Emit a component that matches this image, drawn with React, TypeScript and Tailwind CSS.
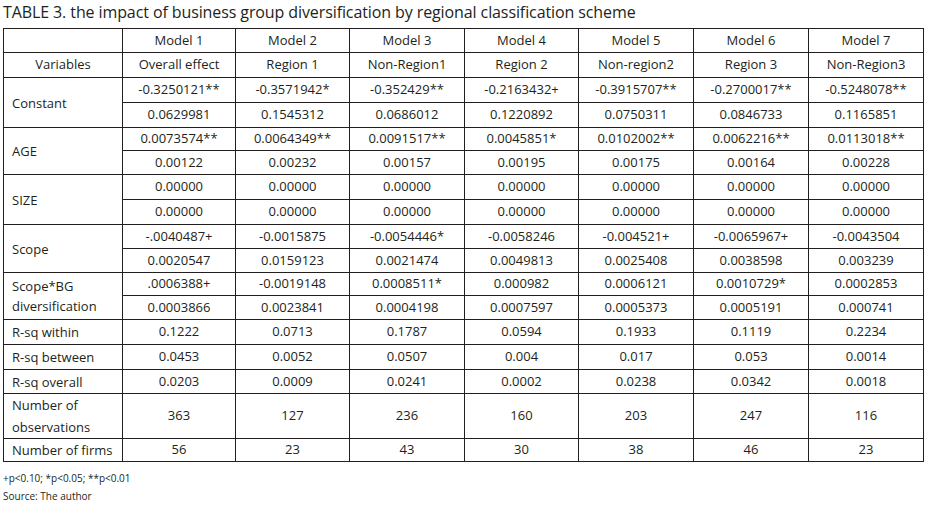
import React from 'react'

type Row = { label: string; values: string[]; h: string }
type Group = { label: string; rows: string[][]; h: string[] }

const groups: Group[] = [
  {
    label: 'Constant',
    h: ['h-[25px]', 'h-[25px]'],
    rows: [
      ['-0.3250121**', '-0.3571942*', '-0.352429**', '-0.2163432+', '-0.3915707**', '-0.2700017**', '-0.5248078**'],
      ['0.0629981', '0.1545312', '0.0686012', '0.1220892', '0.0750311', '0.0846733', '0.1165851'],
    ],
  },
  {
    label: 'AGE',
    h: ['h-[23px]', 'h-[24px]'],
    rows: [
      ['0.0073574**', '0.0064349**', '0.0091517**', '0.0045851*', '0.0102002**', '0.0062216**', '0.0113018**'],
      ['0.00122', '0.00232', '0.00157', '0.00195', '0.00175', '0.00164', '0.00228'],
    ],
  },
  {
    label: 'SIZE',
    h: ['h-[25px]', 'h-[25px]'],
    rows: [
      ['0.00000', '0.00000', '0.00000', '0.00000', '0.00000', '0.00000', '0.00000'],
      ['0.00000', '0.00000', '0.00000', '0.00000', '0.00000', '0.00000', '0.00000'],
    ],
  },
  {
    label: 'Scope',
    h: ['h-[24px]', 'h-[24px]'],
    rows: [
      ['-.0040487+', '-0.0015875', '-0.0054446*', '-0.0058246', '-0.004521+', '-0.0065967+', '-0.0043504'],
      ['0.0020547', '0.0159123', '0.0021474', '0.0049813', '0.0025408', '0.0038598', '0.003239'],
    ],
  },
]

const scopeBg: string[][] = [
  ['.0006388+', '-0.0019148', '0.0008511*', '0.000982', '0.0006121', '0.0010729*', '0.0002853'],
  ['0.0003866', '0.0023841', '0.0004198', '0.0007597', '0.0005373', '0.0005191', '0.000741'],
]

const stats: Row[] = [
  { label: 'R-sq within', h: 'h-[25px]', values: ['0.1222', '0.0713', '0.1787', '0.0594', '0.1933', '0.1119', '0.2234'] },
  { label: 'R-sq between', h: 'h-[25px]', values: ['0.0453', '0.0052', '0.0507', '0.004', '0.017', '0.053', '0.0014'] },
  { label: 'R-sq overall', h: 'h-[24px]', values: ['0.0203', '0.0009', '0.0241', '0.0002', '0.0238', '0.0342', '0.0018'] },
]

const cell = 'border border-[#231f20] text-center align-middle p-0'
const labelCell = 'border border-[#231f20] text-left align-middle pl-[8px] pr-0 py-0 leading-[20px] whitespace-nowrap'

function ValueCells({ values }: { values: string[] }) {
  return (
    <>
      {values.map((v, i) => (
        <td key={i} className={cell}>
          {v}
        </td>
      ))}
    </>
  )
}

export default function App() {
  return (
    <div className="h-[507px] w-[926px] bg-white text-[#231f20]" style={{ fontFamily: '"Open Sans", sans-serif' }}>
      <h1 className="pl-[3px] pt-[1px] text-[16px] font-medium leading-[22px] tracking-[-0.1px]">
        TABLE 3. the impact of business group diversification by regional classification scheme
      </h1>
      <table className="ml-[3px] mt-[5px] w-[920px] table-fixed border-collapse text-[13px]">
        <colgroup>
          <col className="w-[119px]" />
          <col className="w-[113px]" />
          <col className="w-[114px]" />
          <col className="w-[115px]" />
          <col className="w-[114px]" />
          <col className="w-[115px]" />
          <col className="w-[115px]" />
          <col className="w-[115px]" />
        </colgroup>
        <tbody>
          <tr className="h-[24px]">
            <td className={cell}></td>
            {['Model 1', 'Model 2', 'Model 3', 'Model 4', 'Model 5', 'Model 6', 'Model 7'].map((m) => (
              <td key={m} className={cell}>
                {m}
              </td>
            ))}
          </tr>
          <tr className="h-[25px]">
            <td className={cell}>Variables</td>
            <ValueCells values={['Overall effect', 'Region 1', 'Non-Region1', 'Region 2', 'Non-region2', 'Region 3', 'Non-Region3']} />
          </tr>
          {groups.map((g) => (
            <React.Fragment key={g.label}>
              <tr className={g.h[0]}>
                <td rowSpan={2} className={labelCell}>
                  {g.label}
                </td>
                <ValueCells values={g.rows[0]} />
              </tr>
              <tr className={g.h[1]}>
                <ValueCells values={g.rows[1]} />
              </tr>
            </React.Fragment>
          ))}
          <tr className="h-[23px]">
            <td rowSpan={2} className={labelCell}>
              Scope*BG
              <br />
              diversification
            </td>
            <ValueCells values={scopeBg[0]} />
          </tr>
          <tr className="h-[24px]">
            <ValueCells values={scopeBg[1]} />
          </tr>
          {stats.map((r) => (
            <tr key={r.label} className={r.h}>
              <td className={labelCell}>{r.label}</td>
              <ValueCells values={r.values} />
            </tr>
          ))}
          <tr className="h-[44px]">
            <td className="border border-[#231f20] p-0 pl-[8px] text-left align-middle leading-[22px]">
              Number of
              <br />
              observations
            </td>
            <ValueCells values={['363', '127', '236', '160', '203', '247', '116']} />
          </tr>
          <tr className="h-[23px]">
            <td className={labelCell}>Number of firms</td>
            <ValueCells values={['56', '23', '43', '30', '38', '46', '23']} />
          </tr>
        </tbody>
      </table>
      <div className="mt-[7px] pl-[3px] text-[10px] leading-[18px]">
        <p>+p&lt;0.10; *p&lt;0.05; **p&lt;0.01</p>
        <p>Source: The author</p>
      </div>
    </div>
  )
}
